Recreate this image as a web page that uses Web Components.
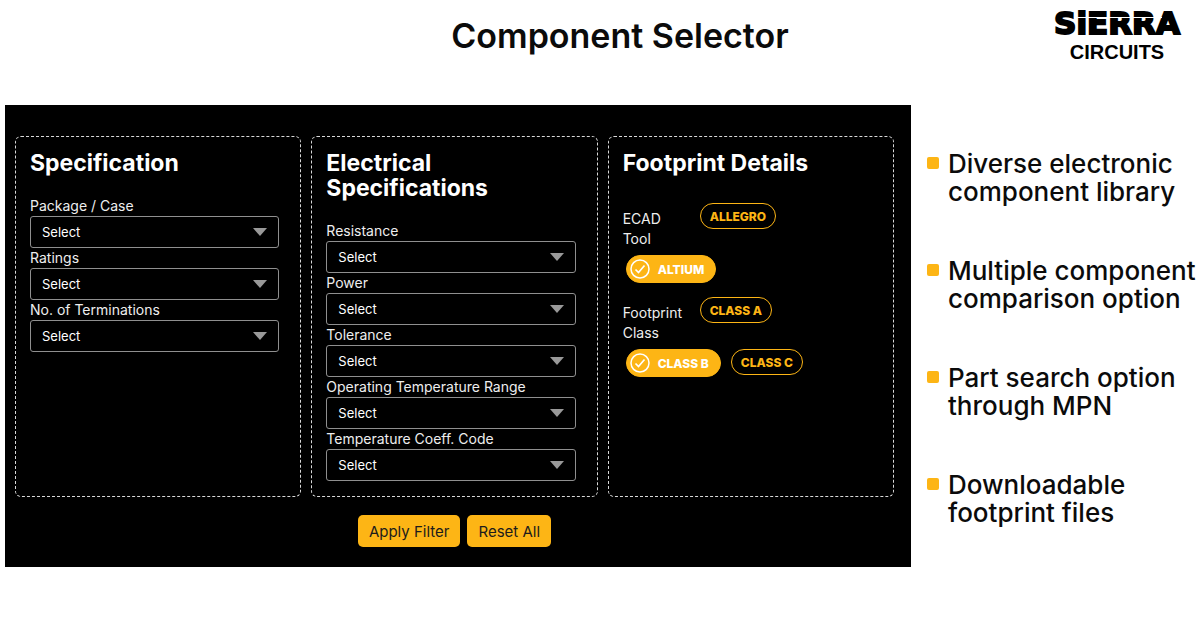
<!DOCTYPE html>
<html lang="en">
<head>
<meta charset="utf-8">
<meta name="viewport" content="width=device-width, initial-scale=1">
<title>Component Selector</title>
<style>
  body {
    margin: 0;
    background: #fff;
    color: #0b0b0b;
    font-family: Inter, "Liberation Sans", sans-serif;
  }
</style>
</head>
<body>
<selector-page>
  <brand-logo slot="logo"></brand-logo>
  <filter-panel>
    <filter-card heading="Specification">
      <select-field label="Package / Case"></select-field>
      <select-field label="Ratings"></select-field>
      <select-field label="No. of Terminations"></select-field>
    </filter-card>
    <filter-card heading="Electrical Specifications">
      <select-field label="Resistance"></select-field>
      <select-field label="Power"></select-field>
      <select-field label="Tolerance"></select-field>
      <select-field label="Operating Temperature Range"></select-field>
      <select-field label="Temperature Coeff. Code"></select-field>
    </filter-card>
    <filter-card heading="Footprint Details" spaced>
      <chip-group label="ECAD Tool" options="ALLEGRO,ALTIUM" value="ALTIUM"></chip-group>
      <chip-group label="Footprint Class" options="CLASS A,CLASS B,CLASS C" value="CLASS B"></chip-group>
    </filter-card>
    <action-button slot="actions">Apply Filter</action-button>
    <action-button slot="actions">Reset All</action-button>
  </filter-panel>
  <feature-list slot="features">
    <feature-item>Diverse electronic component library</feature-item>
    <feature-item>Multiple component comparison option</feature-item>
    <feature-item>Part search option through MPN</feature-item>
    <feature-item>Downloadable footprint files</feature-item>
  </feature-list>
</selector-page>

<script>
class SelectorPage extends HTMLElement {
  constructor() {
    super();
    this.shadowDOM = this.attachShadow({ mode: 'open' });
  }

  connectedCallback() {
    this.shadowDOM.innerHTML = `
      <style>
        :host {
          display: block;
        }
        header {
          display: grid;
          grid-template-columns: 1fr auto 1fr;
          min-height: 105px;
          padding: 0 13px 0 53px;
          box-sizing: border-box;
        }
        h1 {
          grid-column: 2;
          margin: 16px 0 0;
          font-size: 34px;
          line-height: 40px;
          font-weight: 600;
        }
        .logo {
          justify-self: end;
        }
        main {
          display: grid;
          grid-template-columns: minmax(0, 1fr) 273px;
          gap: 16px;
          padding-left: 5px;
          align-items: start;
        }
      </style>
      <header>
        <h1>Component Selector</h1>
        <div class="logo"><slot name="logo"></slot></div>
      </header>
      <main>
        <slot></slot>
        <slot name="features"></slot>
      </main>
    `;
  }
}
customElements.define('selector-page', SelectorPage);

class BrandLogo extends HTMLElement {
  constructor() {
    super();
    this.shadowDOM = this.attachShadow({ mode: 'open' });
  }

  connectedCallback() {
    this.shadowDOM.innerHTML = `
      <style>
        :host {
          display: block;
        }
        svg {
          display: block;
        }
        .top {
          font: 700 31px "DejaVu Sans", sans-serif;
          stroke: #000;
          stroke-width: 2px;
        }
        .bottom {
          font: 700 20px "Liberation Sans", sans-serif;
        }
      </style>
      <svg width="140" height="66" viewBox="0 0 140 66" role="img" aria-label="Sierra Circuits">
        <text class="top" x="70" y="34" text-anchor="middle">SiERRA</text>
        <path d="M27 17.5H115" stroke="#fff" stroke-width="1"/>
        <text class="bottom" x="70" y="59" text-anchor="middle">CIRCUITS</text>
      </svg>
    `;
  }
}
customElements.define('brand-logo', BrandLogo);

class FilterPanel extends HTMLElement {
  constructor() {
    super();
    this.shadowDOM = this.attachShadow({ mode: 'open' });
  }

  connectedCallback() {
    this.shadowDOM.innerHTML = `
      <style>
        :host {
          display: block;
          background: #000;
          color: #fff;
          padding: 31px 17px 20px 10px;
        }
        .cards {
          display: grid;
          grid-template-columns: repeat(3, minmax(0, 1fr));
          gap: 10px;
        }
        .actions {
          display: flex;
          justify-content: center;
          gap: 7px;
          margin-top: 18px;
        }
      </style>
      <div class="cards"><slot></slot></div>
      <div class="actions"><slot name="actions"></slot></div>
    `;
  }
}
customElements.define('filter-panel', FilterPanel);

class FilterCard extends HTMLElement {
  constructor() {
    super();
    this.shadowDOM = this.attachShadow({ mode: 'open' });
  }

  connectedCallback() {
    this.shadowDOM.innerHTML = `
      <style>
        :host {
          display: block;
          box-sizing: border-box;
          border: 1px dashed #d8d8d8;
          border-radius: 6px;
          padding: 14px 21px 15px 14px;
        }
        h2 {
          margin: 0 0 20px;
          font-size: 23px;
          line-height: 25px;
          font-weight: 700;
        }
        :host([spaced]) h2 {
          margin-bottom: 27px;
        }
      </style>
      <h2>${this.getAttribute('heading')}</h2>
      <slot></slot>
    `;
  }
}
customElements.define('filter-card', FilterCard);

class SelectField extends HTMLElement {
  constructor() {
    super();
    this.shadowDOM = this.attachShadow({ mode: 'open' });
  }

  connectedCallback() {
    this.shadowDOM.innerHTML = `
      <style>
        :host {
          display: block;
        }
        label {
          display: block;
          font-size: 14px;
          line-height: 20px;
          color: #eee;
        }
        .box {
          display: grid;
          align-items: center;
        }
        select, svg {
          grid-area: 1 / 1;
        }
        select {
          appearance: none;
          width: 100%;
          height: 32px;
          padding: 0 32px 0 11px;
          border: 1px solid #8f8f8f;
          border-radius: 3px;
          background: #000;
          color: #fff;
          font-family: inherit;
          font-size: 13px;
        }
        svg {
          justify-self: end;
          margin-right: 12px;
          pointer-events: none;
        }
      </style>
      <label for="field">${this.getAttribute('label')}</label>
      <div class="box">
        <select id="field"><option>Select</option></select>
        <svg width="14" height="8" viewBox="0 0 14 8" aria-hidden="true"><path d="M0 0h14L7 8z" fill="#999"/></svg>
      </div>
    `;
  }
}
customElements.define('select-field', SelectField);

class ChipGroup extends HTMLElement {
  constructor() {
    super();
    this.shadowDOM = this.attachShadow({ mode: 'open' });
  }

  connectedCallback() {
    const label = this.getAttribute('label');
    const value = this.getAttribute('value');
    const chips = this.getAttribute('options').split(',').map((option) => `
      <label class="chip">
        <input type="radio" name="chip" value="${option}" ${option === value ? 'checked' : ''}>
        <svg width="20" height="20" viewBox="0 0 20 20" fill="none" stroke="#fff" aria-hidden="true">
          <circle cx="10" cy="10" r="9" stroke-width="1.5"/>
          <path d="M5.5 10.5l3 3 6-7" stroke-width="1.7"/>
        </svg>
        <span>${option}</span>
      </label>`).join('');

    this.shadowDOM.innerHTML = `
      <style>
        :host {
          display: block;
          margin-bottom: 14px;
        }
        .row {
          display: flex;
          flex-wrap: wrap;
          align-items: flex-start;
          gap: 6px 7px;
        }
        .name {
          width: 67px;
          padding-top: 6px;
          font-size: 14px;
          line-height: 20px;
          color: #eee;
        }
        .chip {
          display: flex;
          align-items: center;
          box-sizing: border-box;
          height: 26px;
          margin-left: 3px;
          padding: 0 9px;
          border: 1px solid #fdb515;
          border-radius: 14px;
          color: #fdb515;
          font-size: 12px;
          font-weight: 800;
          cursor: pointer;
        }
        input {
          appearance: none;
          width: 0;
          height: 0;
          margin: 0;
        }
        svg {
          display: none;
        }
        .chip:has(:checked) {
          height: 28px;
          padding: 0 11px 0 3px;
          background: #fdb515;
          color: #fff;
        }
        :checked + svg {
          display: block;
          margin-right: 8px;
        }
      </style>
      <div class="row" role="radiogroup" aria-labelledby="name">
        <div class="name" id="name">${label}</div>
        ${chips}
      </div>
    `;
  }
}
customElements.define('chip-group', ChipGroup);

class ActionButton extends HTMLElement {
  constructor() {
    super();
    this.shadowDOM = this.attachShadow({ mode: 'open' });
  }

  connectedCallback() {
    this.shadowDOM.innerHTML = `
      <style>
        :host {
          display: block;
        }
        button {
          height: 32px;
          padding: 0 11px;
          border: 0;
          border-radius: 5px;
          background: #fdb515;
          color: #1c1c1c;
          font-family: inherit;
          font-size: 15px;
          cursor: pointer;
        }
      </style>
      <button type="button"><slot></slot></button>
    `;
  }
}
customElements.define('action-button', ActionButton);

class FeatureList extends HTMLElement {
  constructor() {
    super();
    this.shadowDOM = this.attachShadow({ mode: 'open' });
  }

  connectedCallback() {
    this.setAttribute('role', 'list');
    this.shadowDOM.innerHTML = `
      <style>
        :host {
          display: flex;
          flex-direction: column;
          gap: 51px;
          padding-top: 45px;
        }
      </style>
      <slot></slot>
    `;
  }
}
customElements.define('feature-list', FeatureList);

class FeatureItem extends HTMLElement {
  constructor() {
    super();
    this.shadowDOM = this.attachShadow({ mode: 'open' });
  }

  connectedCallback() {
    this.setAttribute('role', 'listitem');
    this.shadowDOM.innerHTML = `
      <style>
        :host {
          display: flex;
          gap: 9px;
          font-size: 26px;
          line-height: 28px;
          font-weight: 500;
        }
        i {
          flex: none;
          width: 12px;
          height: 12px;
          margin-top: 7px;
          border-radius: 2px;
          background: #fdb515;
        }
      </style>
      <i></i>
      <span><slot></slot></span>
    `;
  }
}
customElements.define('feature-item', FeatureItem);
</script>
</body>
</html>
